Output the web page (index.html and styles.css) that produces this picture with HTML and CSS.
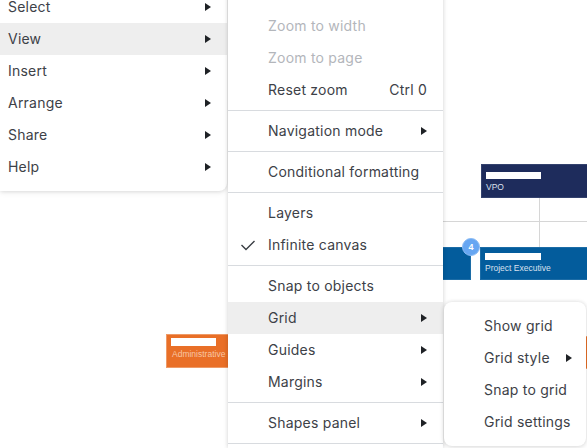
FILE: index.html
```html
<!DOCTYPE html>
<html>
<head>
<meta charset="utf-8">
<link rel="stylesheet" href="styles.css">
</head>
<body>
<div class="canvas">
  <div class="line line-v1"></div>
  <div class="line line-h"></div>
  <div class="line line-v2"></div>
  <div class="node node-navy node-vpo"><span class="redact redact-vpo"></span><span class="node-title">VPO</span></div>
  <div class="node node-blue node-pe"><span class="redact redact-pe"></span><span class="node-title">Project Executive</span></div>
  <div class="node node-blue node-left"></div>
  <div class="badge">4</div>
  <div class="node node-orange node-admin"><span class="redact redact-admin"></span><span class="node-title node-title-orange">Administrative</span></div>
  <div class="node node-orange node-right"></div>
</div>

<div class="menu menu-main">
  <div class="item"><span class="label">Select</span><span class="arrow"></span></div>
  <div class="item active"><span class="label">View</span><span class="arrow"></span></div>
  <div class="item"><span class="label">Insert</span><span class="arrow"></span></div>
  <div class="item"><span class="label">Arrange</span><span class="arrow"></span></div>
  <div class="item"><span class="label">Share</span><span class="arrow"></span></div>
  <div class="item"><span class="label">Help</span><span class="arrow"></span></div>
</div>

<div class="menu menu-view">
  <div class="item disabled"><span class="label">Zoom to width</span></div>
  <div class="item disabled"><span class="label">Zoom to page</span></div>
  <div class="item"><span class="label">Reset zoom</span><span class="shortcut">Ctrl 0</span></div>
  <div class="sep"></div>
  <div class="item"><span class="label">Navigation mode</span><span class="arrow"></span></div>
  <div class="sep"></div>
  <div class="item"><span class="label">Conditional formatting</span></div>
  <div class="sep"></div>
  <div class="item"><span class="label">Layers</span></div>
  <div class="item"><svg class="check" width="16" height="12" viewBox="0 0 16 12"><polyline points="1.5,6 6,10.5 14.5,2" fill="none" stroke="#3a3e44" stroke-width="1.4"/></svg><span class="label">Infinite canvas</span></div>
  <div class="sep"></div>
  <div class="item"><span class="label">Snap to objects</span></div>
  <div class="item active"><span class="label">Grid</span><span class="arrow"></span></div>
  <div class="item"><span class="label">Guides</span><span class="arrow"></span></div>
  <div class="item"><span class="label">Margins</span><span class="arrow"></span></div>
  <div class="sep"></div>
  <div class="item"><span class="label">Shapes panel</span><span class="arrow"></span></div>
  <div class="sep"></div>
</div>

<div class="menu menu-grid">
  <div class="item"><span class="label">Show grid</span></div>
  <div class="item"><span class="label">Grid style</span><span class="arrow arrow-inline"></span></div>
  <div class="item"><span class="label">Snap to grid</span></div>
  <div class="item"><span class="label">Grid settings</span></div>
</div>
</body>
</html>
```

FILE: styles.css
```css
* { box-sizing: border-box; }
html, body {
  margin: 0;
  padding: 0;
  width: 587px;
  height: 448px;
  overflow: hidden;
  background: #ffffff;
  font-family: "Inter", "Liberation Sans", sans-serif;
}

.canvas {
  position: relative;
  width: 587px;
  height: 448px;
}

.line { position: absolute; background: #d6d6d6; }
.line-v1 { left: 539px; top: 198px; width: 1px; height: 24px; }
.line-h { left: 443px; top: 221px; width: 144px; height: 1px; }
.line-v2 { left: 539px; top: 222px; width: 1px; height: 25px; }

.node {
  position: absolute;
  display: flex;
  flex-direction: column;
  padding: 7px 0 0 4px;
  gap: 3px;
}
.node-navy { background: #1e2c5c; border: 1px solid #34426e; }
.node-blue { background: #035c9c; border: 1px solid #1c6ca6; }
.node-orange { background: #e96f27; border: 1px solid #ee9a67; }

.node-vpo { left: 481px; top: 164px; width: 120px; height: 34px; }
.node-pe { left: 480px; top: 247px; width: 120px; height: 33px; padding-top: 5px; }
.node-left { left: 420px; top: 247px; width: 51px; height: 33px; }
.node-admin { left: 166px; top: 334px; width: 70px; height: 34px; padding-top: 3px; }
.node-right { left: 560px; top: 336px; width: 40px; height: 33px; }

.redact { display: block; background: #ffffff; height: 7px; }
.redact-vpo { width: 55px; }
.redact-pe { width: 56px; }
.redact-admin { width: 45px; height: 8px; }

.node-title {
  font-family: "Liberation Sans", Arial, sans-serif;
  font-size: 8.5px;
  line-height: 10px;
  color: #d9e0ee;
}
.node-title-orange { color: #f8c6a4; padding-left: 1px; }

.badge {
  position: absolute;
  left: 462px;
  top: 238px;
  width: 18px;
  height: 18px;
  border-radius: 50%;
  background: #66a6f2;
  border: 1px solid #8dbdf5;
  color: #ffffff;
  font-family: "Liberation Sans", Arial, sans-serif;
  font-size: 9px;
  font-weight: bold;
  display: flex;
  align-items: center;
  justify-content: center;
}

.menu {
  position: absolute;
  background: #ffffff;
  padding: 8px 0;
  box-shadow: 0 0 4px rgba(0, 0, 0, 0.14), 0 2px 6px rgba(0, 0, 0, 0.06);
}
.menu-main {
  left: 0;
  top: -17px;
  width: 227px;
  border-radius: 0 0 8px 0;
}
.menu-view {
  left: 228px;
  top: -30px;
  width: 215px;
  padding-top: 40px;
  padding-bottom: 0;
}
.menu-grid {
  left: 444px;
  top: 302px;
  width: 142px;
  border-radius: 8px;
}

.item {
  position: relative;
  height: 32px;
  display: flex;
  align-items: center;
  padding: 0 16px 0 8px;
  font-size: 14px;
  letter-spacing: 0.22px;
  color: #3d4147;
  white-space: nowrap;
}
.menu-view .item, .menu-grid .item { padding-left: 40px; }
.item.active { background: #eeeeee; }
.item.disabled { color: #b3b6bb; }
.label { flex: 1 1 auto; line-height: 14px; }
.menu-grid .label { flex: 0 0 auto; }

.shortcut { color: #3d4147; line-height: 14px; }

.arrow {
  width: 0;
  height: 0;
  border-top: 4px solid transparent;
  border-bottom: 4px solid transparent;
  border-left: 6px solid #1f2226;
}
.arrow-inline { margin-left: 16px; }

.check {
  position: absolute;
  left: 12px;
  top: 10px;
}

.sep {
  height: 1px;
  margin: 4px 0;
  background: #d8dbdf;
}
```
